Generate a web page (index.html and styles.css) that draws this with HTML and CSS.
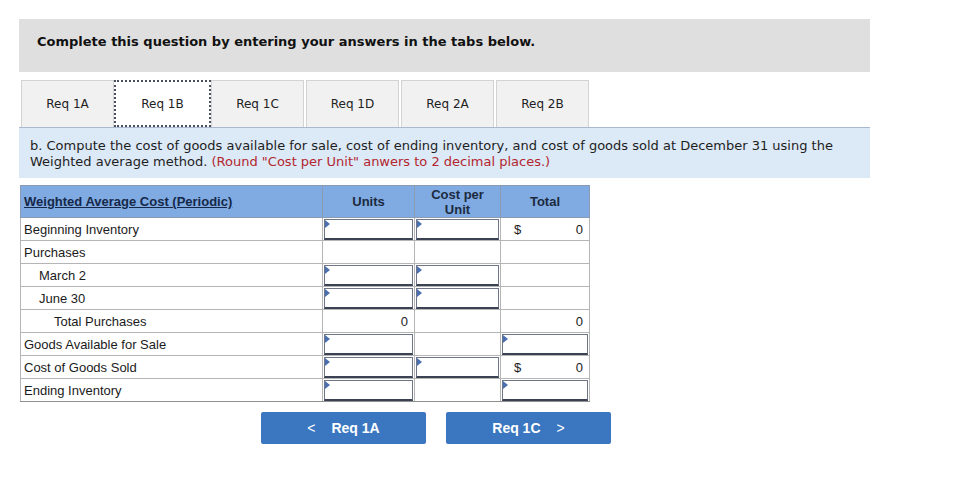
FILE: index.html
```html
<!DOCTYPE html>
<html>
<head>
<meta charset="utf-8">
<link rel="stylesheet" href="styles.css">
</head>
<body>
<div class="page">
  <div class="banner">Complete this question by entering your answers in the tabs below.</div>
  <div class="tabs">
    <div class="tab">Req 1A</div>
    <div class="tab active">Req 1B</div>
    <div class="tab">Req 1C</div>
    <div class="tab">Req 1D</div>
    <div class="tab">Req 2A</div>
    <div class="tab">Req 2B</div>
  </div>
  <div class="prompt">
    <div>b. Compute the cost of goods available for sale, cost of ending inventory, and cost of goods sold at December 31 using the</div>
    <div><span>Weighted average method.</span> <span class="red">(Round "Cost per Unit" anwers to 2 decimal places.)</span></div>
  </div>
  <table class="grid">
    <colgroup>
      <col class="c-label"><col class="c-units"><col class="c-cpu"><col class="c-total">
    </colgroup>
    <thead>
      <tr>
        <th class="title"><u>Weighted Average Cost (Periodic)</u></th>
        <th>Units</th>
        <th>Cost per<br>Unit</th>
        <th>Total</th>
      </tr>
    </thead>
    <tbody>
      <tr>
        <td>Beginning Inventory</td>
        <td class="in"><div class="box"></div></td>
        <td class="in"><div class="box"></div></td>
        <td><div class="money"><span>$</span><span>0</span></div></td>
      </tr>
      <tr>
        <td>Purchases</td><td></td><td></td><td></td>
      </tr>
      <tr>
        <td class="ind1">March 2</td>
        <td class="in"><div class="box"></div></td>
        <td class="in"><div class="box"></div></td>
        <td></td>
      </tr>
      <tr>
        <td class="ind1">June 30</td>
        <td class="in"><div class="box"></div></td>
        <td class="in"><div class="box"></div></td>
        <td></td>
      </tr>
      <tr>
        <td class="ind2">Total Purchases</td>
        <td class="num">0</td>
        <td></td>
        <td class="num">0</td>
      </tr>
      <tr>
        <td>Goods Available for Sale</td>
        <td class="in"><div class="box"></div></td>
        <td></td>
        <td class="in"><div class="box"></div></td>
      </tr>
      <tr>
        <td>Cost of Goods Sold</td>
        <td class="in"><div class="box"></div></td>
        <td class="in"><div class="box"></div></td>
        <td><div class="money"><span>$</span><span>0</span></div></td>
      </tr>
      <tr>
        <td>Ending Inventory</td>
        <td class="in"><div class="box"></div></td>
        <td></td>
        <td class="in"><div class="box"></div></td>
      </tr>
    </tbody>
  </table>
  <div class="nav">
    <div class="btn"><span class="chev">&lt;</span><span>Req 1A</span></div>
    <div class="btn"><span>Req 1C</span><span class="chev">&gt;</span></div>
  </div>
</div>
</body>
</html>
```

FILE: styles.css
```css
html, body {
  margin: 0;
  padding: 0;
  background: #ffffff;
}
.page {
  padding: 19px 0 0 19px;
  width: 851px;
  font-family: "DejaVu Sans", Verdana, sans-serif;
  color: #1b1b1b;
}
.banner {
  height: 53px;
  box-sizing: border-box;
  background: #dfdfdf;
  padding: 15px 0 0 18px;
  font-size: 13px;
  font-weight: bold;
  line-height: 16px;
  color: #111;
}
.tabs {
  display: flex;
  gap: 2px;
  padding-left: 2px;
  margin-top: 8px;
  border-bottom: 1px solid #a9bad0;
}
.tab {
  width: 93px;
  height: 47px;
  box-sizing: border-box;
  background: #f1f1f1;
  border: 1px solid #d3d3d3;
  border-bottom: none;
  display: flex;
  align-items: center;
  justify-content: center;
  font-size: 12px;
  color: #222;
}
.tab.active {
  background: #ffffff;
  border: 2px dotted #4a4f60;
  margin-left: -2px;
  margin-right: -2px;
  width: 97px;
}
.prompt {
  background: #dce9f6;
  padding: 10px 11px 9px 11px;
  height: 50px;
  box-sizing: border-box;
  font-size: 13px;
  line-height: 16px;
  color: #1e1e1e;
  white-space: nowrap;
}
.red {
  color: #b3262f;
}
.grid {
  margin: 7px 0 0 1px;
  border-collapse: collapse;
  width: 569px;
  table-layout: fixed;
  font-family: "Liberation Sans", Arial, sans-serif;
  font-size: 13px;
  color: #1b1b1b;
}
.c-label { width: 302px; }
.c-units { width: 92px; }
.c-cpu { width: 86px; }
.c-total { width: 89px; }
.grid thead tr { height: 32px; }
.grid tbody tr { height: 23px; }
.grid th {
  background: #7fabe2;
  padding: 0;
  border: 1px solid #8a9bb3;
  font-weight: bold;
  font-size: 13px;
  line-height: 15px;
  color: #1c2a40;
  text-align: center;
}
.grid th.title {
  text-align: left;
  padding-left: 3px;
  color: #15284a;
}
.grid td {
  padding: 0 3px;
  border: 1px solid #b5b5b5;
  vertical-align: middle;
  white-space: nowrap;
  line-height: 15px;
}
.grid tbody tr:last-child td {
  border-bottom: 1px solid #8f8f8f;
}
.grid td.ind1 { padding-left: 18px; }
.grid td.ind2 { padding-left: 33px; }
.grid td.num { text-align: right; padding-right: 6px; }
.grid td.in {
  padding: 1px 1px 0 1px;
  vertical-align: top;
}
.box {
  height: 21px;
  box-sizing: border-box;
  border: 1px solid #6e7688;
  border-bottom: 2px solid #3a4254;
  position: relative;
  background: #fff;
}
.box::before {
  content: "";
  position: absolute;
  left: 0;
  top: 0;
  width: 0;
  height: 0;
  border-top: 4px solid transparent;
  border-bottom: 4px solid transparent;
  border-left: 5px solid #4a70b0;
}
.money {
  display: flex;
  justify-content: space-between;
  padding: 0 3px 0 10px;
}
.nav {
  display: flex;
  gap: 20px;
  margin: 10px 0 0 242px;
}
.btn {
  width: 165px;
  height: 32px;
  background: #3a77c0;
  border-radius: 2px;
  color: #ffffff;
  font-family: "Liberation Sans", Arial, sans-serif;
  font-weight: bold;
  font-size: 14px;
  display: flex;
  align-items: center;
  justify-content: center;
  gap: 16px;
}
.chev {
  font-weight: normal;
  font-size: 14px;
}
```
